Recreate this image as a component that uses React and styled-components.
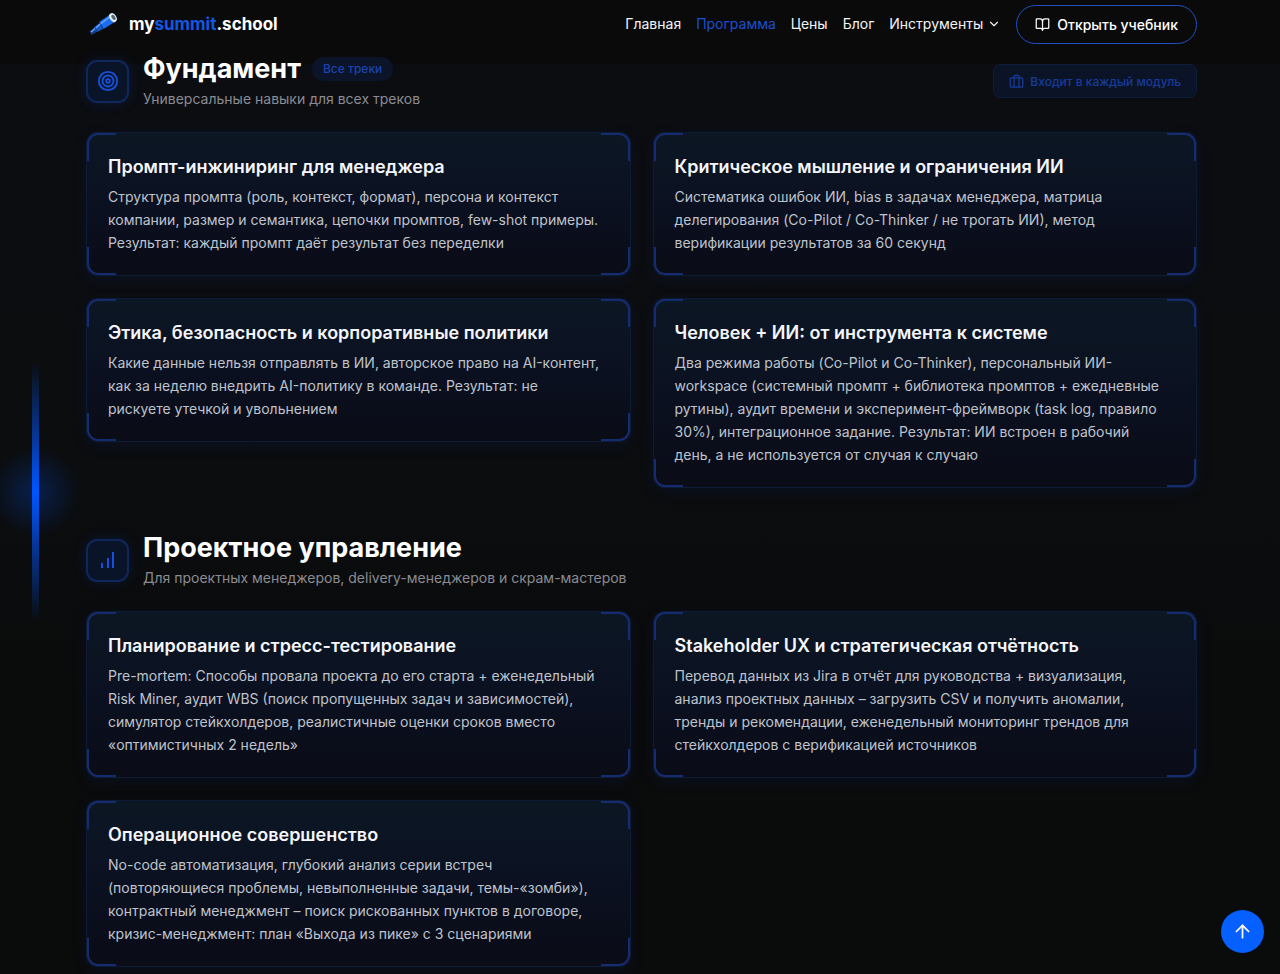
import React from 'react';
import styled, { createGlobalStyle, css } from 'styled-components';
import { ArrowUp, BookOpen, ChevronDown } from 'lucide-react';

const GlobalStyle = createGlobalStyle`
  * {
    box-sizing: border-box;
  }

  body {
    margin: 0;
    background-color: #0b0c0e;
    color: #ffffff;
    font-family: 'Inter', 'Noto Sans', sans-serif;
  }
`;

const Page = styled.div`
  position: relative;
  min-height: 100vh;
  overflow: hidden;
  background: linear-gradient(180deg, #0a0a0b 0, #0a0a0b 64px, #0c0d11 64px, #0b0d0f 400px, #0a0b0b 700px);
`;

const Container = styled.div`
  width: 100%;
  max-width: 1154px;
  margin: 0 auto;
  padding: 0 20px 0 23px;
`;

const Header = styled.header`
  height: 48px;
`;

const HeaderRow = styled(Container)`
  display: flex;
  align-items: center;
  justify-content: space-between;
  height: 100%;
`;

const Brand = styled.a`
  display: flex;
  align-items: center;
  gap: 10px;
  color: #ffffff;
  font-size: 17px;
  font-weight: 700;
  text-decoration: none;

  em {
    color: #1257e6;
    font-style: normal;
  }
`;

const Nav = styled.nav`
  display: flex;
  align-items: center;
  gap: 15px;
`;

const navItem = css`
  display: flex;
  align-items: center;
  gap: 4px;
  padding: 0;
  border: none;
  background: none;
  color: ${(props) => (props.$active ? '#1b4fd0' : '#f4f4f5')};
  font-family: inherit;
  font-size: 14px;
  line-height: 24px;
  text-decoration: none;
  cursor: pointer;
`;

const NavLink = styled.a`
  ${navItem}
`;

const NavButton = styled.button`
  ${navItem}
`;

const BookLink = styled.a`
  display: flex;
  align-items: center;
  gap: 7px;
  height: 39px;
  padding: 0 18px;
  border: 1px solid #2050c0;
  border-radius: 20px;
  color: #ffffff;
  font-size: 14px;
  font-weight: 500;
  text-decoration: none;
`;

const Main = styled(Container).attrs({ as: 'main' })`
  display: flex;
  flex-direction: column;
  gap: 43px;
  padding-top: 4px;
`;

const Track = styled.section`
  display: flex;
  flex-direction: column;
  gap: 22px;
`;

const TrackHeader = styled.div`
  display: flex;
  align-items: center;
  gap: 14px;
`;

const TrackIcon = styled.div`
  display: flex;
  align-items: center;
  justify-content: center;
  width: 43px;
  height: 43px;
  border: 2px solid #10275c;
  border-radius: 11px;
  background-color: #0a1428;
  box-shadow: 0 0 14px rgba(0, 85, 255, 0.16);
  color: #1650dc;
`;

const TrackText = styled.div`
  flex: 1;
`;

const TitleLine = styled.div`
  display: flex;
  align-items: center;
  gap: 11px;
`;

const TrackTitle = styled.h2`
  margin: 0;
  font-size: 27px;
  font-weight: 700;
  line-height: 34px;
`;

const Tag = styled.span`
  padding: 0 11px;
  border-radius: 12px;
  background-color: #0b1429;
  color: #1a43ad;
  font-size: 12px;
  font-weight: 500;
  line-height: 24px;
`;

const TrackSubtitle = styled.p`
  margin: 2px 0 0;
  color: #8b8b92;
  font-size: 14px;
  line-height: 22px;
`;

const ModuleBadge = styled.div`
  display: flex;
  align-items: center;
  gap: 6px;
  height: 34px;
  padding: 0 15px;
  border: 1px solid #0e1c3c;
  border-radius: 7px;
  background-color: #0b1327;
  color: #173c9c;
  font-size: 12px;
  font-weight: 500;
`;

const CardGrid = styled.div`
  display: grid;
  grid-template-columns: repeat(2, minmax(0, 1fr));
  align-items: start;
  gap: 22px;
`;

const Card = styled.article`
  position: relative;
  padding: 23px 28px 21px 21px;
  border: 1px solid #0d1c36;
  border-radius: 11px;
  background: linear-gradient(180deg, #0c1724 0%, #0b1020 55%, #0a0c16 100%);
  box-shadow: 0 4px 16px rgba(0, 60, 200, 0.1);
`;

const Corner = styled.span`
  position: absolute;
  ${(props) => props.$v}: 0;
  ${(props) => props.$h}: 0;
  width: 29px;
  height: 28px;
  border: 0 solid #172b70;
  border-${(props) => props.$v}-width: 2px;
  border-${(props) => props.$h}-width: 2px;
  border-${(props) => props.$v}-${(props) => props.$h}-radius: 11px;
`;

const CardTitle = styled.h3`
  margin: 0 0 7px;
  color: #f4f6fb;
  font-size: 18px;
  font-weight: 600;
  line-height: 22px;
`;

const CardText = styled.p`
  margin: 0;
  color: #bfc3cc;
  font-size: 14px;
  line-height: 23px;
`;

const Beam = styled.div`
  position: absolute;
  top: 362px;
  left: 32px;
  width: 7px;
  height: 260px;
  background: linear-gradient(180deg, transparent, #0055ff 50%, transparent);

  &::before {
    content: '';
    position: absolute;
    top: 84px;
    left: -43px;
    width: 92px;
    height: 92px;
    border-radius: 50%;
    background: radial-gradient(circle, rgba(0, 85, 255, 0.26), rgba(0, 85, 255, 0) 70%);
  }
`;

const TopButton = styled.button`
  position: fixed;
  right: 16px;
  bottom: 21px;
  display: flex;
  align-items: center;
  justify-content: center;
  width: 43px;
  height: 43px;
  padding: 0;
  border: none;
  border-radius: 50%;
  background-color: #0560ff;
  color: #ffffff;
  cursor: pointer;
`;

const Telescope = () => (
  <svg width="33" height="26" viewBox="0 0 33 26" fill="none" aria-hidden="true">
    <path d="M3.5 20.5 9 16.5l2.5 4-6 3.5z" fill="#153f8c" />
    <path d="m8 16.5 6.5-5.5 3.8 6-7.3 4.3z" fill="#1559c8" />
    <path d="M13 11 25.5 2.5q5 2 4 8L17.5 18z" fill="#1b6df0" />
    <path d="m5 21 10-8.5L25 5" stroke="#6cabff" strokeWidth="1.4" />
    <path d="m9 16.5 2.5 4.5M13.5 11.5l4 6.5" stroke="#0f3a88" />
    <ellipse cx="27" cy="6.6" rx="3.3" ry="4.8" transform="rotate(-32 27 6.6)" fill="#e4eeff" />
    <ellipse cx="27.5" cy="6.4" rx="1.7" ry="2.9" transform="rotate(-32 27.5 6.4)" fill="#5b6472" />
  </svg>
);

const TargetIcon = () => (
  <svg width="22" height="22" viewBox="0 0 24 24" fill="none" stroke="currentColor" strokeWidth="2" aria-hidden="true">
    <circle cx="12" cy="12" r="10" />
    <circle cx="12" cy="12" r="6" />
    <circle cx="12" cy="12" r="2" />
  </svg>
);

const BarsIcon = () => (
  <svg width="22" height="22" viewBox="0 0 22 22" fill="none" stroke="currentColor" strokeWidth="2" aria-hidden="true">
    <path d="M5 19v-5M11 19V9M16 19V3" />
  </svg>
);

const CaseIcon = () => (
  <svg width="15" height="15" viewBox="0 0 24 24" fill="none" stroke="currentColor" strokeWidth="2" aria-hidden="true">
    <rect x="2" y="6" width="20" height="15" rx="2" />
    <path d="M8 21V4a2 2 0 0 1 2-2h4a2 2 0 0 1 2 2v17" />
  </svg>
);

const tracks = [
  {
    title: 'Фундамент',
    tag: 'Все треки',
    subtitle: 'Универсальные навыки для всех треков',
    badge: 'Входит в каждый модуль',
    icon: <TargetIcon />,
    cards: [
      {
        title: 'Промпт-инжиниринг для менеджера',
        text: 'Структура промпта (роль, контекст, формат), персона и контекст компании, размер и семантика, цепочки промптов, few-shot примеры. Результат: каждый промпт даёт результат без переделки',
      },
      {
        title: 'Критическое мышление и ограничения ИИ',
        text: 'Систематика ошибок ИИ, bias в задачах менеджера, матрица делегирования (Co-Pilot / Co-Thinker / не трогать ИИ), метод верификации результатов за 60 секунд',
      },
      {
        title: 'Этика, безопасность и корпоративные политики',
        text: 'Какие данные нельзя отправлять в ИИ, авторское право на AI-контент, как за неделю внедрить AI-политику в команде. Результат: не рискуете утечкой и увольнением',
      },
      {
        title: 'Человек + ИИ: от инструмента к системе',
        text: 'Два режима работы (Co-Pilot и Co-Thinker), персональный ИИ-workspace (системный промпт + библиотека промптов + ежедневные рутины), аудит времени и эксперимент-фреймворк (task log, правило 30%), интеграционное задание. Результат: ИИ встроен в рабочий день, а не используется от случая к случаю',
      },
    ],
  },
  {
    title: 'Проектное управление',
    subtitle: 'Для проектных менеджеров, delivery-менеджеров и скрам-мастеров',
    icon: <BarsIcon />,
    cards: [
      {
        title: 'Планирование и стресс-тестирование',
        text: 'Pre-mortem: Способы провала проекта до его старта + еженедельный Risk Miner, аудит WBS (поиск пропущенных задач и зависимостей), симулятор стейкхолдеров, реалистичные оценки сроков вместо «оптимистичных 2 недель»',
      },
      {
        title: 'Stakeholder UX и стратегическая отчётность',
        text: 'Перевод данных из Jira в отчёт для руководства + визуализация, анализ проектных данных – загрузить CSV и получить аномалии, тренды и рекомендации, еженедельный мониторинг трендов для стейкхолдеров с верификацией источников',
      },
      {
        title: 'Операционное совершенство',
        text: 'No-code автоматизация, глубокий анализ серии встреч (повторяющиеся проблемы, невыполненные задачи, темы-«зомби»), контрактный менеджмент – поиск рискованных пунктов в договоре, кризис-менеджмент: план «Выхода из пике» с 3 сценариями',
      },
    ],
  },
];

function TopicCard({ title, text }) {
  return (
    <Card>
      <Corner $v="top" $h="left" />
      <Corner $v="top" $h="right" />
      <Corner $v="bottom" $h="left" />
      <Corner $v="bottom" $h="right" />
      <CardTitle>{title}</CardTitle>
      <CardText>{text}</CardText>
    </Card>
  );
}

function App() {
  return (
    <Page>
      <GlobalStyle />
      <Beam />
      <Header>
        <HeaderRow>
          <Brand href="#">
            <Telescope />
            <span>my<em>summit</em>.school</span>
          </Brand>
          <Nav>
            <NavLink href="#">Главная</NavLink>
            <NavLink href="#" $active>Программа</NavLink>
            <NavLink href="#">Цены</NavLink>
            <NavLink href="#">Блог</NavLink>
            <NavButton type="button">
              Инструменты
              <ChevronDown size={14} />
            </NavButton>
            <BookLink href="#">
              <BookOpen size={15} />
              Открыть учебник
            </BookLink>
          </Nav>
        </HeaderRow>
      </Header>

      <Main>
        {tracks.map((track) => (
          <Track key={track.title}>
            <TrackHeader>
              <TrackIcon>{track.icon}</TrackIcon>
              <TrackText>
                <TitleLine>
                  <TrackTitle>{track.title}</TrackTitle>
                  {track.tag && <Tag>{track.tag}</Tag>}
                </TitleLine>
                <TrackSubtitle>{track.subtitle}</TrackSubtitle>
              </TrackText>
              {track.badge && (
                <ModuleBadge>
                  <CaseIcon />
                  {track.badge}
                </ModuleBadge>
              )}
            </TrackHeader>
            <CardGrid>
              {track.cards.map((card) => (
                <TopicCard key={card.title} {...card} />
              ))}
            </CardGrid>
          </Track>
        ))}
      </Main>

      <TopButton type="button" aria-label="Наверх">
        <ArrowUp size={21} />
      </TopButton>
    </Page>
  );
}

export default App;
